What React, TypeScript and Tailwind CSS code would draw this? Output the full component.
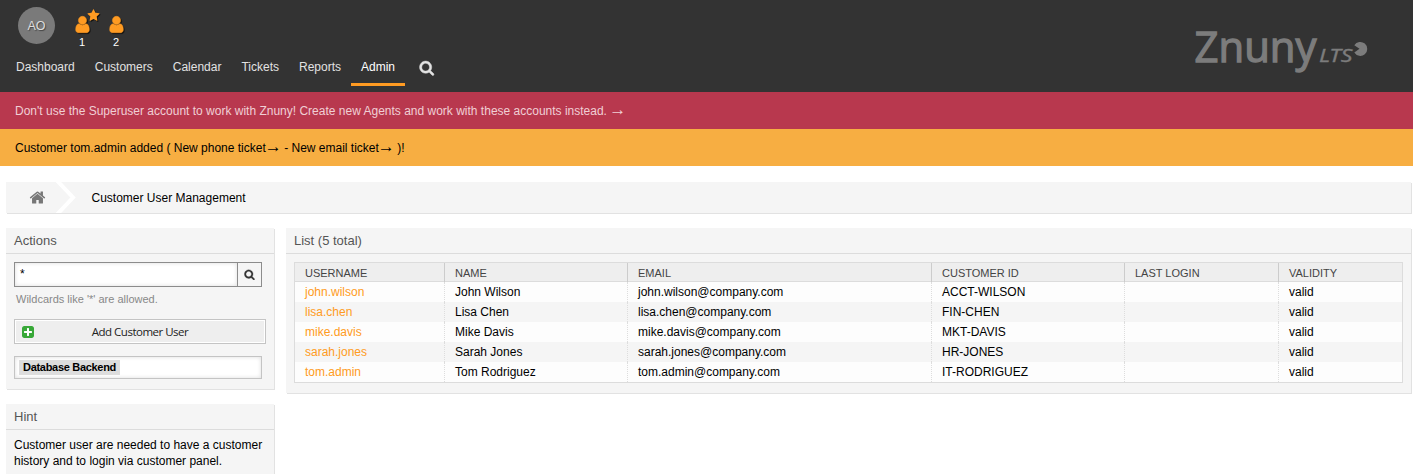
import type { ReactNode } from "react";

const PATHS = {
  search:
    "M1216 832q0-185-131.5-316.5t-316.5-131.5-316.5 131.5-131.5 316.5 131.5 316.5 316.5 131.5 316.5-131.5 131.5-316.5zm512 832q0 52-38 90t-90 38q-54 0-90-38l-343-342q-179 124-399 124-143 0-273.5-55.5t-225-150-150-225-55.5-273.5 55.5-273.5 150-225 225-150 273.5-55.5 273.5 55.5 225 150 150 225 55.5 273.5q0 220-124 399l343 343q37 37 37 90z",
  home: "M1472 992v480q0 26-19 45t-45 19h-384v-384h-256v384h-384q-26 0-45-19t-19-45v-480q0-1 .5-3t.5-3l575-474 575 474q1 2 1 6zm223-69l-62 74q-8 9-21 11h-3q-13 0-21-7l-692-577-692 577q-12 8-24 7-13-2-21-11l-62-74q-8-10-7-23.5t11-21.5l719-599q32-26 76-26t76 26l244 204v-195q0-14 9-23t23-9h192q14 0 23 9t9 23v408l219 182q10 8 11 21.5t-7 23.5z",
  star: "M1728 647q0 22-26 48l-363 354 86 500q1 7 1 20 0 21-10.5 35.5t-30.5 14.5q-19 0-40-12l-449-236-449 236q-22 12-40 12-21 0-31.5-14.5t-10.5-35.5q0-6 2-20l86-500-364-354q-25-27-25-48 0-37 56-46l502-73 225-455q19-41 49-41t49 41l225 455 502 73q56 9 56 46z",
  user: "M1536 1399q0 109-62.5 187t-150.5 78h-854q-88 0-150.5-78t-62.5-187q0-85 8.5-160.5t31.5-152 58.5-131 94-89 134.5-34.5q131 128 313 128t313-128q76 0 134.5 34.5t94 89 58.5 131 31.5 152 8.5 160.5zm-256-887q0 159-112.5 271.5t-271.5 112.5-271.5-112.5-112.5-271.5 112.5-271.5 271.5-112.5 271.5 112.5 112.5 271.5z",
  plus: "M1408 960v-128q0-26-19-45t-45-19h-320v-320q0-26-19-45t-45-19h-128q-26 0-45 19t-19 45v320h-320q-26 0-45 19t-19 45v128q0 26 19 45t45 19h320v320q0 26 19 45t45 19h128q26 0 45-19t19-45v-320h320q26 0 45-19t19-45zm256-544v960q0 119-84.5 203.5t-203.5 84.5h-960q-119 0-203.5-84.5t-84.5-203.5v-960q0-119 84.5-203.5t203.5-84.5h960q119 0 203.5 84.5t84.5 203.5z",
};

function Icon({ name, className }: { name: keyof typeof PATHS; className: string }) {
  return (
    <svg viewBox="0 0 1792 1792" fill="currentColor" stroke="currentColor" className={className}>
      <path d={PATHS[name]} strokeWidth={name === "search" || name === "user" ? 50 : 0} />
    </svg>
  );
}

function Agent({ count, starred }: { count: number; starred?: boolean }) {
  return (
    <div className="relative flex w-[34px] flex-col items-center">
      <Icon name="user" className="size-[19px] text-[#ff9b22] drop-shadow-[1px_1px_0_#111]" />
      {starred && (
        <Icon
          name="star"
          className="absolute -top-[6px] left-[22px] size-[13px] text-[#ff9b22] drop-shadow-[1px_1px_0_#111]"
        />
      )}
      <span className="mt-px text-[11px] leading-[14px] text-white">{count}</span>
    </div>
  );
}

function NavItem({ label, active }: { label: string; active?: boolean }) {
  return (
    <li
      className={
        active
          ? "h-[29px] border-b-3 border-[#ff9b22] px-[10px] text-white"
          : "h-[29px] px-[10px] text-[#e2e2e2]"
      }
    >
      {label}
    </li>
  );
}

function Arrow() {
  return <span className="-mx-px text-[17px] leading-none">→</span>;
}

function Logo() {
  return (
    <svg width="180" height="84" viewBox="0 -14 180 84" fill="#7c7c7c" className="mt-[6px] mr-[43px]">
      <text
        x="4.5"
        y="41.5"
        fontFamily="'Open Sans', 'Noto Sans', sans-serif"
        fontSize="41.5"
        textLength="122"
        lengthAdjust="spacingAndGlyphs"
        stroke="#7c7c7c"
        strokeWidth="1.3"
      >
        Znuny
      </text>
      <text
        x="129"
        y="42"
        fontFamily="'Noto Sans', sans-serif"
        fontStyle="italic"
        fontSize="18"
        textLength="33.5"
        lengthAdjust="spacingAndGlyphs"
        stroke="#7c7c7c"
        strokeWidth="0.3"
      >
        LTS
      </text>
      <path d="M169.500 28.800L164.300 25.200A7 7 0 1 1 164.300 32.600Z" />
    </svg>
  );
}

function Panel({ title, className, children }: { title: string; className: string; children: ReactNode }) {
  return (
    <section className={"bg-[#f5f5f5] shadow-[1px_1px_0_#e2e2e2] " + className}>
      <h2 className="h-[26px] border-b border-[#dcdcdc] pl-2 text-[13px] leading-[25px] text-[#555]">{title}</h2>
      {children}
    </section>
  );
}

const HEADS = ["USERNAME", "NAME", "EMAIL", "CUSTOMER ID", "LAST LOGIN", "VALIDITY"];
const ROWS = [
  ["john.wilson", "John Wilson", "john.wilson@company.com", "ACCT-WILSON", "", "valid"],
  ["lisa.chen", "Lisa Chen", "lisa.chen@company.com", "FIN-CHEN", "", "valid"],
  ["mike.davis", "Mike Davis", "mike.davis@company.com", "MKT-DAVIS", "", "valid"],
  ["sarah.jones", "Sarah Jones", "sarah.jones@company.com", "HR-JONES", "", "valid"],
  ["tom.admin", "Tom Rodriguez", "tom.admin@company.com", "IT-RODRIGUEZ", "", "valid"],
];
const GRID = "grid grid-cols-[149px_183px_304px_193px_154px_1fr]";

export default function App() {
  return (
    <div className="h-[474px] overflow-hidden bg-white font-['Liberation_Sans',Arial,sans-serif] text-[12px] text-black">
      <header className="flex h-[92px] justify-between bg-[#333]">
        <div>
          <div className="flex h-[57px] pl-[18px]">
            <div className="mt-[7px] flex size-[37px] items-center justify-center rounded-full bg-[#7a7a7a] pt-0.5 text-[12.5px] text-[#ddd] [text-shadow:1px_1px_1px_#444]">
              AO
            </div>
            <div className="ml-[10px] flex pt-[15px]">
              <Agent count={1} starred />
              <Agent count={2} />
            </div>
          </div>
          <nav className="flex pl-[6px]">
            <ul className="flex leading-[20px]">
              <NavItem label="Dashboard" />
              <NavItem label="Customers" />
              <NavItem label="Calendar" />
              <NavItem label="Tickets" />
              <NavItem label="Reports" />
              <NavItem label="Admin" active />
            </ul>
            <Icon name="search" className="mt-[3px] ml-[14px] size-[15.5px] text-[#e2e2e2]" />
          </nav>
        </div>
        <Logo />
      </header>

      <div className="h-[37px] bg-[#b8384e] pl-[15px] leading-[38px] text-[#f0cfd5]">
        Don't use the Superuser account to work with Znuny! Create new Agents and work with these accounts instead. <Arrow />
      </div>
      <div className="h-[37px] bg-[#f7ae42] pl-[15px] leading-[38px]">
        Customer tom.admin added ( New phone ticket
        <Arrow /> - New email ticket
        <Arrow /> )!
      </div>

      <div className="mt-4 mr-[2px] ml-[6px] flex h-[31px] bg-[#f5f5f5] shadow-[1px_1px_0_#e2e2e2]">
        <div className="flex w-[49px] justify-end pt-[7px] pr-[9px] text-[#777]">
          <Icon name="home" className="size-[17px]" />
        </div>
        <svg width="21" height="31" viewBox="0 0 21 31" fill="none" stroke="#fff" strokeWidth="4">
          <path d="M1.500 -2L18 15.500L1.500 33" />
        </svg>
        <span className="pl-[15.5px] leading-[32px]">Customer User Management</span>
      </div>

      <div className="mt-[15px] flex items-start pl-[6px]">
        <div className="w-[268px]">
          <Panel title="Actions" className="h-[161px]">
            <div className="px-2 pt-2">
              <div className="flex h-[25px] w-[248px] border border-[#8c8c8c]">
                <div className="flex-1 bg-white pl-[5px] leading-[23px] shadow-[inset_0_0_4px_#ddd]">*</div>
                <div className="flex w-[24px] items-center justify-center border-l border-[#8c8c8c] bg-[#f5f5f5] text-[#333]">
                  <Icon name="search" className="size-[11px]" />
                </div>
              </div>
              <p className="mt-[4px] pl-[2px] text-[11px] leading-[16px] text-[#888]">Wildcards like '*' are allowed.</p>
              <div className="mt-[12px] flex h-[25px] w-[252px] items-center border border-[#c4c4c4] bg-[#eee] shadow-[inset_0_0_0_1px_#fff]">
                <span className="ml-[8px] flex size-[10px] items-center justify-center bg-white">
                  <Icon name="plus" className="size-[14px] shrink-0 text-[#38a838]" />
                </span>
                <span className="flex-1 pr-[18px] text-center font-['Open_Sans',sans-serif] text-[11.5px] leading-[22px] tracking-[-0.5px] text-[#222]">
                  Add Customer User
                </span>
              </div>
              <div className="mt-3 flex h-[23px] w-[248px] border border-[#c4c4c4] bg-white py-[3px] pl-1 shadow-[inset_0_0_4px_#ddd]">
                <span className="bg-[#ddd] px-1 text-[11px] leading-[15px] font-bold tracking-[-0.3px]">
                  Database Backend
                </span>
              </div>
            </div>
          </Panel>
          <Panel title="Hint" className="mt-[15px] h-[90px]">
            <p className="px-2 pt-[7px] leading-[16px]">
              Customer user are needed to have a customer history and to login via customer panel.
            </p>
          </Panel>
        </div>

        <Panel title="List (5 total)" className="ml-3 h-[165px] w-[1125px]">
          <div className="mt-2 ml-2 w-[1109px] border border-[#dcdcdc]">
            <div className={GRID + " h-[19px] border-b border-[#dcdcdc] bg-[#eee] text-[11px] leading-[20px] text-[#444]"}>
              {HEADS.map((head, i) => (
                <div key={head} className={i ? "border-l border-[#ccc] pl-[10px]" : "pl-[10px]"}>
                  {head}
                </div>
              ))}
            </div>
            {ROWS.map((row) => (
              <div key={row[0]} className={GRID + " h-[20px] leading-[20px] even:bg-[#fdfdfd] odd:bg-[#f5f5f5]"}>
                {row.map((cell, i) => (
                  <div
                    key={i}
                    className={i ? "border-l border-dotted border-[#ddd] pl-[10px]" : "pl-[10px] text-[#ff9b22]"}
                  >
                    {cell}
                  </div>
                ))}
              </div>
            ))}
          </div>
        </Panel>
      </div>
    </div>
  );
}
